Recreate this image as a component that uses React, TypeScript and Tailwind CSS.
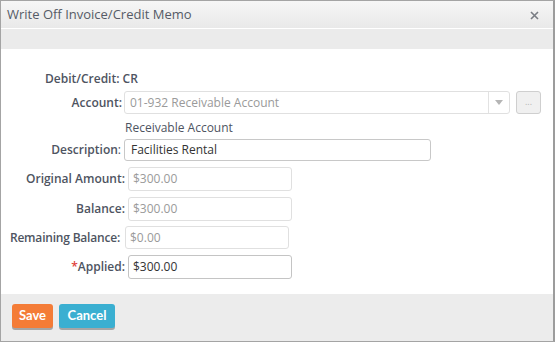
import React from "react";

const font = { fontFamily: '"Open Sans", "Liberation Sans", sans-serif' };

function Label({ w, children, req }: { w: string; children: React.ReactNode; req?: boolean }) {
  return (
    <div className={`${w} shrink-0 text-right text-[12px] font-semibold text-[#4e5461]`}>
      {req && <span className="text-[#e0403a]">*</span>}
      {children}
    </div>
  );
}

export default function App() {
  return (
    <div className="h-[342px] w-[556px] bg-white" style={font}>
      <div className="flex h-[342px] w-[555px] flex-col border border-[#a4a4a4] border-r-2 border-r-[#9c9c9c]">
        {/* header */}
        <div className="flex h-[28px] items-center justify-between border-b border-white bg-gradient-to-b from-[#f6f6f6] to-[#e9e9e9] pl-[6px] pr-[14px]">
          <span className="text-[13px] text-[#555b66]">Write Off Invoice/Credit Memo</span>
          <svg width="9" height="9" viewBox="0 0 9 9" className="mt-[1px]">
            <path d="M1 1 L8 8 M8 1 L1 8" stroke="#7a7d84" strokeWidth="1.6" />
          </svg>
        </div>
        {/* toolbar */}
        <div className="h-[20px] bg-[#ebebeb]" />
        {/* content */}
        <div className="flex flex-1 flex-col bg-white pt-[22px]">
          <div className="flex h-[16px] items-center pl-[44px] text-[12px] font-semibold text-[#4e5461]">
            Debit/Credit: CR
          </div>

          <div className="mt-[4px] flex h-[23px] items-center">
            <Label w="w-[121px]">Account:</Label>
            <div className="ml-[2px] flex h-[23px] w-[386px] items-center rounded-[3px] border border-[#e0e0e0] bg-white">
              <span className="flex-1 pl-[5px] text-[12px] text-[#9a9a9a]">01-932 Receivable Account</span>
              <div className="flex h-full w-[21px] items-center justify-center border-l border-[#e2e2e2]">
                <svg width="8" height="5" viewBox="0 0 8 5">
                  <path d="M0 0 L8 0 L4 5 Z" fill="#b5b5b5" />
                </svg>
              </div>
            </div>
            <div className="ml-[6px] flex h-[23px] w-[25px] items-center justify-center rounded-[3px] border border-[#cfcfcf] bg-[#f0f0f0] pb-[2px] text-[9px] text-[#b5b5b5]">
              ...
            </div>
          </div>

          <div className="mt-[6px] flex h-[16px] items-center pl-[124px] text-[12px] text-[#4e5461]">
            Receivable Account
          </div>

          <div className="mt-[3px] flex h-[22px] items-center">
            <Label w="w-[120px]">
              Description<span className="font-normal">:</span>
            </Label>
            <div className="ml-[3px] flex h-[22px] w-[307px] items-center rounded-[3px] border border-[#c8c8c8] pl-[6px] text-[12px] text-[#333]">
              Facilities Rental
            </div>
          </div>

          <div className="mt-[6px] flex h-[24px] items-center">
            <Label w="w-[124px]">Original Amount:</Label>
            <div className="ml-[3px] flex h-[24px] w-[164px] items-center rounded-[3px] border border-[#e0e0e0] pl-[4px] text-[12px] text-[#9a9a9a]">
              $300.00
            </div>
          </div>

          <div className="mt-[6px] flex h-[24px] items-center">
            <Label w="w-[124px]">Balance:</Label>
            <div className="ml-[3px] flex h-[24px] w-[164px] items-center rounded-[3px] border border-[#e0e0e0] pl-[4px] text-[12px] text-[#9a9a9a]">
              $300.00
            </div>
          </div>

          <div className="mt-[5px] flex h-[23px] items-center">
            <div className="w-[119px] shrink-0 text-right text-[12px] font-semibold tracking-[-0.2px] text-[#4e5461]">
              Remaining Balance:
            </div>
            <div className="ml-[5px] flex h-[23px] w-[164px] items-center rounded-[3px] border border-[#e0e0e0] pl-[4px] text-[12px] text-[#9a9a9a]">
              $0.00
            </div>
          </div>

          <div className="mt-[6px] flex h-[24px] items-center">
            <Label w="w-[124px]" req>
              Applied:
            </Label>
            <div className="ml-[3px] flex h-[24px] w-[164px] items-center rounded-[3px] border border-[#c4c4c4] pl-[4px] text-[12px] text-[#333]">
              $300.00
            </div>
          </div>
        </div>
        {/* footer */}
        <div className="flex h-[47px] items-start gap-[6px] bg-[#ececec] pl-[11px] pt-[10px]">
          <button
            className="flex h-[24px] w-[41px] items-center justify-center rounded-[3px] bg-[#f47c37] text-[13px] font-bold text-white shadow-[0_2px_0_#a5a5a5]"
            style={{ fontFamily: 'Lato, "Open Sans", sans-serif' }}
          >
            Save
          </button>
          <button
            className="flex h-[24px] w-[56px] items-center justify-center rounded-[3px] bg-[#3aafd1] text-[13px] font-bold text-white shadow-[0_2px_0_#a5a5a5]"
            style={{ fontFamily: 'Lato, "Open Sans", sans-serif' }}
          >
            Cancel
          </button>
        </div>
      </div>
    </div>
  );
}
